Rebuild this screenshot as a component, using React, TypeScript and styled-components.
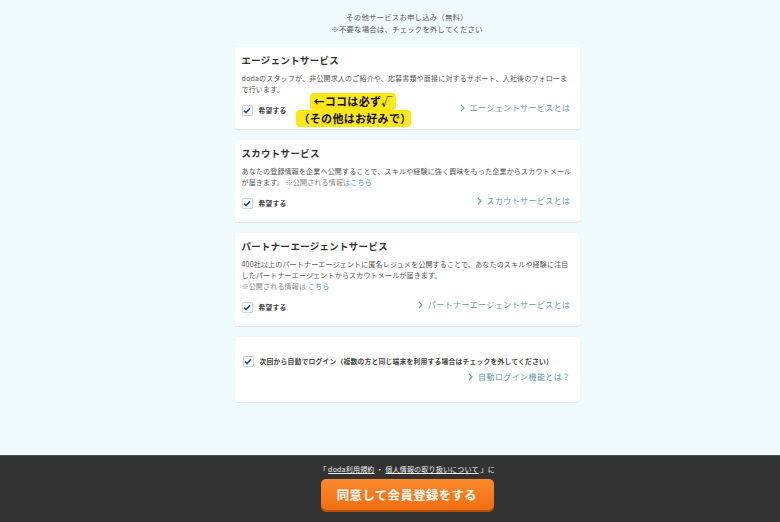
import styled, { createGlobalStyle } from "styled-components";

const Global = createGlobalStyle`
  html, body {
    margin: 0;
    padding: 0;
    background: #f0fafd;
    font-family: "Noto Sans CJK JP", "Noto Sans", sans-serif;
    color: #333;
  }
`;

const Page = styled.div`
  width: 780px;
  min-height: 522px;
  display: flex;
  flex-direction: column;
`;

const Main = styled.main`
  display: flex;
  flex-direction: column;
  align-items: center;
  padding: 11px 0 53px 34px;
`;

const Lead = styled.p`
  margin: 0 0 12px;
  font-size: 7.4px;
  line-height: 12px;
  color: #555;
  text-align: center;
  letter-spacing: 0.2px;
`;

const List = styled.div`
  width: 345px;
  display: flex;
  flex-direction: column;
  gap: 11px;
`;

const Card = styled.section<{ $tall?: boolean }>`
  position: relative;
  background: #fff;
  border-radius: 3px;
  box-shadow: 0 1px 1px rgba(0, 0, 0, 0.08);
  padding: ${(p) => (p.$tall ? "16px 9px 18px 8px" : "6px 6px 13px 7px")};
`;

const Title = styled.h2`
  margin: 0 0 5.5px;
  font-size: 9.4px;
  line-height: 14px;
  font-weight: 700;
  letter-spacing: 0.4px;
  color: #333;
`;

const Desc = styled.p`
  margin: 0 0 7.5px;
  font-size: 7px;
  line-height: 11px;
  letter-spacing: 0.18px;
  color: #555;
`;

const Note = styled.span`
  color: #888;
`;

const More = styled.a`
  color: #3f8fc0;
  text-decoration: none;
`;

const Row = styled.div`
  display: flex;
  align-items: center;
  justify-content: space-between;
  height: 14px;
  padding-right: 3px;
`;

const CheckLabel = styled.label`
  display: flex;
  align-items: center;
  gap: 6px;
  font-size: 6.8px;
  font-weight: 700;
  color: #444;
  letter-spacing: 0.2px;
  padding-top: 2px;
`;

const Box = styled.span`
  width: 9px;
  height: 9px;
  border: 1px solid #c9d3da;
  border-radius: 1px;
  background: #fff;
  display: flex;
  align-items: center;
  justify-content: center;
`;

const InfoLink = styled.a`
  display: flex;
  align-items: center;
  gap: 5px;
  font-size: 8px;
  letter-spacing: 0.4px;
  color: #5f97ae;
  text-decoration: none;
  margin-top: -3px;
`;

const LoginRow = styled.div`
  display: flex;
  align-items: center;
  height: 14px;
  margin-bottom: 5px;
`;

const LinkLine = styled.div`
  display: flex;
  justify-content: flex-end;
  height: 12px;
`;

const Callout = styled.div`
  position: absolute;
  left: 61px;
  top: 46px;
  width: 115px;
  display: flex;
  flex-direction: column;
  align-items: center;
`;

const Marker = styled.span`
  background: #ffe619;
  color: #111;
  font-size: 11px;
  font-weight: 700;
  line-height: 17px;
  padding: 0 3px;
  border-radius: 4px;
  letter-spacing: 0.3px;
`;

const Footer = styled.footer`
  margin-top: auto;
  background: #333;
  border-top: 1px solid #4a5050;
  display: flex;
  flex-direction: column;
  align-items: center;
  padding: 7px 0 12px 34px;
`;

const Agree = styled.p`
  margin: 0 0 4px;
  font-size: 7px;
  line-height: 12px;
  color: #eee;
  letter-spacing: 0.2px;
  a {
    color: #eee;
    text-decoration: underline;
  }
`;

const Submit = styled.button`
  width: 173px;
  height: 31px;
  border: none;
  border-radius: 5px;
  background: linear-gradient(#fb8a2c, #f26d12);
  box-shadow: 0 2px 0 #b44f0c;
  color: #fff;
  font-family: inherit;
  font-size: 12.4px;
  font-weight: 700;
  letter-spacing: 0.4px;
`;

function Check() {
  return (
    <Box>
      <svg width="8" height="7" viewBox="0 0 8 7">
        <path d="M1 3.6 L3.1 5.6 L7 1.2" fill="none" stroke="#1f4f86" strokeWidth="1.6" />
      </svg>
    </Box>
  );
}

function Chevron() {
  return (
    <svg width="5" height="8" viewBox="0 0 5 8">
      <path d="M1 1 L4 4 L1 7" fill="none" stroke="#6f9db3" strokeWidth="1.2" />
    </svg>
  );
}

function ServiceRow({ link }: { link: string }) {
  return (
    <Row>
      <CheckLabel>
        <Check />
        希望する
      </CheckLabel>
      <InfoLink href="#">
        <Chevron />
        {link}
      </InfoLink>
    </Row>
  );
}

export default function App() {
  return (
    <Page>
      <Global />
      <Main>
        <Lead>
          その他サービスお申し込み（無料）
          <br />
          ※不要な場合は、チェックを外してください
        </Lead>
        <List>
          <Card>
            <Title>エージェントサービス</Title>
            <Desc>
              dodaのスタッフが、非公開求人のご紹介や、応募書類や面接に対するサポート、入社後のフォローまで行います。
            </Desc>
            <ServiceRow link="エージェントサービスとは" />
            <Callout>
              <Marker>←ココは必ず√</Marker>
              <Marker>（その他はお好みで）</Marker>
            </Callout>
          </Card>
          <Card>
            <Title>スカウトサービス</Title>
            <Desc>
              あなたの登録情報を企業へ公開することで、スキルや経験に強く興味をもった企業からスカウトメールが届きます。{" "}
              <Note>※公開される情報は</Note>
              <More href="#">こちら</More>
            </Desc>
            <ServiceRow link="スカウトサービスとは" />
          </Card>
          <Card>
            <Title>パートナーエージェントサービス</Title>
            <Desc>
              400社以上のパートナーエージェントに匿名レジュメを公開することで、あなたのスキルや経験に注目したパートナーエージェントからスカウトメールが届きます。
              <br />
              <Note>※公開される情報は </Note>
              <More href="#">こちら</More>
            </Desc>
            <ServiceRow link="パートナーエージェントサービスとは" />
          </Card>
          <Card $tall>
            <LoginRow>
              <CheckLabel>
                <Check />
                次回から自動でログイン（複数の方と同じ端末を利用する場合はチェックを外してください）
              </CheckLabel>
            </LoginRow>
            <LinkLine>
              <InfoLink href="#">
                <Chevron />
                自動ログイン機能とは？
              </InfoLink>
            </LinkLine>
          </Card>
        </List>
      </Main>
      <Footer>
        <Agree>
          「 <a href="#">doda利用規約</a> ・ <a href="#">個人情報の取り扱いについて</a> 」に
        </Agree>
        <Submit>同意して会員登録をする</Submit>
      </Footer>
    </Page>
  );
}
